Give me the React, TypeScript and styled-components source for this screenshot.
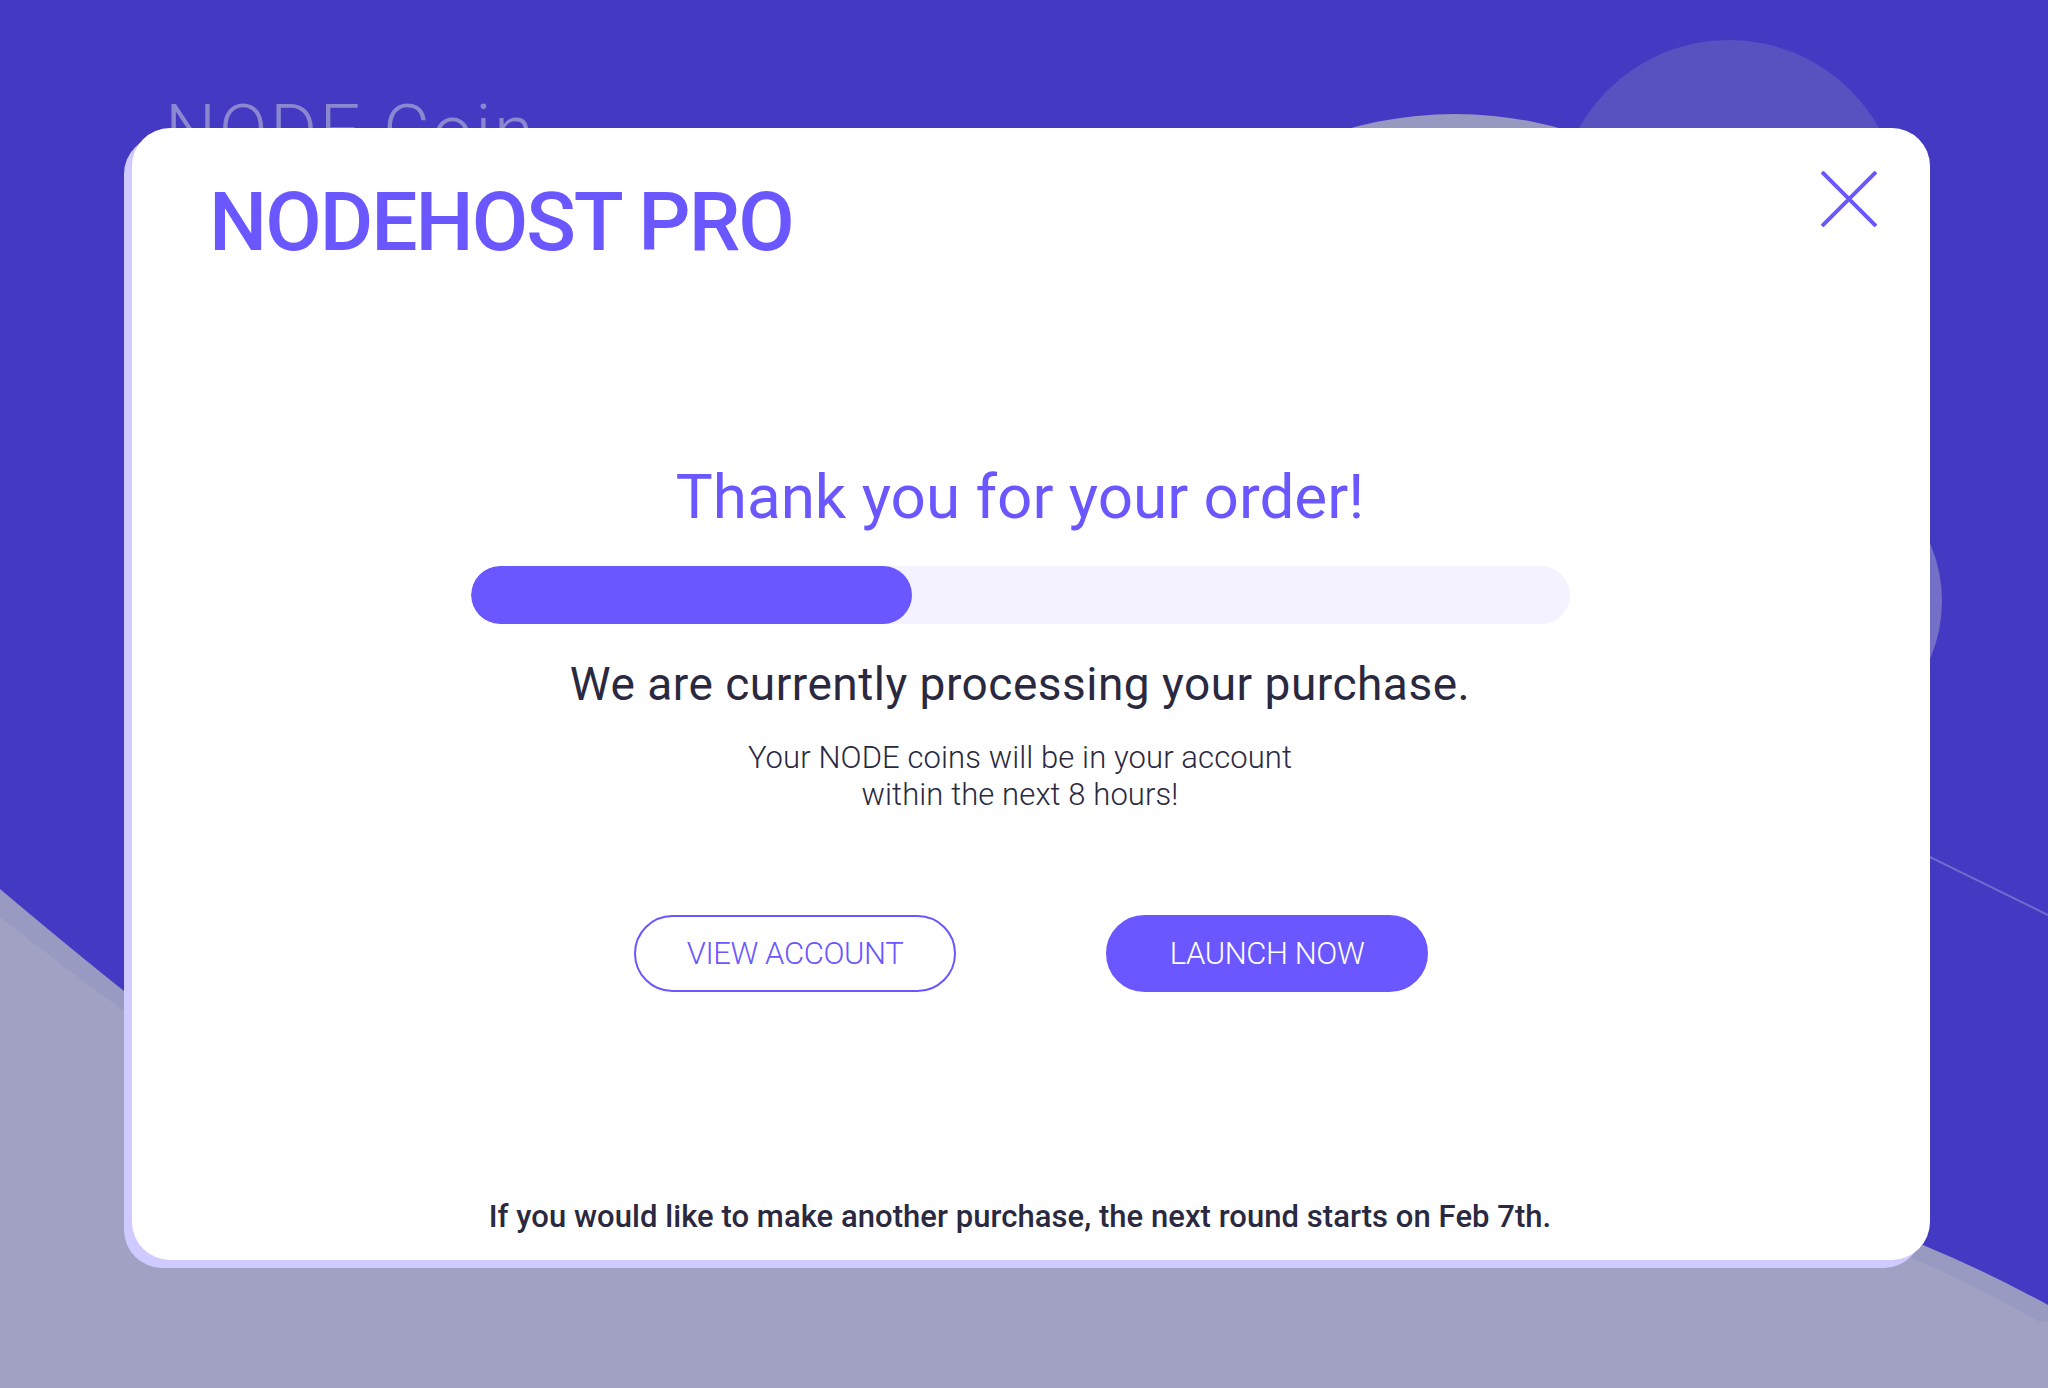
import React from "react";
import styled, { createGlobalStyle } from "styled-components";

const GlobalStyle = createGlobalStyle`
  html, body {
    margin: 0;
    padding: 0;
  }
  body {
    font-family: Roboto, "Liberation Sans", sans-serif;
    background: #4439c3;
  }
`;

const Page = styled.div`
  position: relative;
  width: 100%;
  height: 100vh;
  overflow: hidden;
  background: #4439c3;
`;

const Backdrop = styled.svg`
  position: absolute;
  inset: 0;
  width: 100%;
  height: 100%;
`;

const PageTitle = styled.h1`
  position: relative;
  margin: 0;
  padding: 96px 0 0 165px;
  font-size: 72px;
  line-height: 1;
  font-weight: 300;
  letter-spacing: 2.5px;
  color: #8b88cf;
`;

const Overlay = styled.div`
  position: absolute;
  inset: 0;
  display: flex;
  align-items: flex-start;
  padding: 128px 0 0 132px;
`;

const Card = styled.div`
  width: 1798px;
  height: 1132px;
  box-sizing: border-box;
  display: flex;
  flex-direction: column;
  background: #ffffff;
  border-radius: 38px;
  box-shadow: -8px 8px 0 #cfcaff;
`;

const Header = styled.div`
  display: flex;
  justify-content: space-between;
  align-items: flex-start;
  padding: 43px 53px 0 77px;
`;

const Brand = styled.div`
  margin-top: 10px;
  font-size: 82px;
  line-height: 1;
  font-weight: 500;
  letter-spacing: -2px;
  color: #6a57ff;
`;

const CloseButton = styled.button`
  width: 56px;
  height: 56px;
  padding: 0;
  border: none;
  background: none;
  cursor: pointer;
  svg {
    display: block;
  }
`;

const Body = styled.div`
  flex: 1;
  display: flex;
  flex-direction: column;
  align-items: center;
  padding: 0 22px 28px 0;
`;

const Thanks = styled.h2`
  margin: 203px 0 0;
  font-size: 62px;
  line-height: 1;
  font-weight: 400;
  color: #6a57ff;
`;

const Track = styled.div`
  margin-top: 38px;
  width: 1099px;
  height: 58px;
  border-radius: 29px;
  background: #f4f2fe;
  overflow: hidden;
`;

const Fill = styled.div`
  height: 100%;
  border-radius: 29px;
  background: #6a57ff;
`;

const Lead = styled.p`
  margin: 37px 0 0;
  font-size: 46px;
  line-height: 1;
  font-weight: 400;
  letter-spacing: 0.5px;
  color: #2a2940;
`;

const Note = styled.p`
  margin: 32px 0 0;
  font-size: 31px;
  line-height: 37px;
  font-weight: 300;
  letter-spacing: 0.1px;
  text-align: center;
  color: #2a2940;
`;

const Actions = styled.div`
  display: flex;
  gap: 150px;
  margin: 102px 0 0 22px;
`;

const Pill = styled.button<{ $filled?: boolean }>`
  width: 322px;
  height: 77px;
  box-sizing: border-box;
  border-radius: 39px;
  border: 2px solid #6a57ff;
  background: ${(p) => (p.$filled ? "#6a57ff" : "#ffffff")};
  color: ${(p) => (p.$filled ? "#ffffff" : "#6a57ff")};
  font-family: Roboto, "Liberation Sans", sans-serif;
  font-size: 31px;
  font-weight: 300;
  letter-spacing: -0.4px;
  cursor: pointer;
`;

const Footer = styled.p`
  margin: auto 0 0;
  font-size: 31px;
  line-height: 1;
  font-weight: 500;
  letter-spacing: 0.05px;
  color: #2a2940;
`;

export default function App() {
  const progress = 40.2;
  return (
    <>
      <GlobalStyle />
      <Page>
        <Backdrop viewBox="0 0 2048 1388" preserveAspectRatio="none">
          <circle cx="1455" cy="507" r="393" fill="#9899c1" />
          <path
            d="M0,889 Q70,948 124,991 L1923,1245 Q1988,1272 2048,1305 V1388 H0 Z"
            fill="#989ac1"
          />
          <path
            d="M0,917 Q70,972 124,1011 L1910,1257 Q1980,1288 2040,1322 L2048,1322 V1388 H0 Z"
            fill="#a1a1c4"
          />
          <circle cx="1729" cy="212" r="172" fill="#5852c0" />
          <circle cx="1796" cy="601" r="146" fill="#7470c8" />
          <line x1="1700" y1="744" x2="2048" y2="915" stroke="#6f6ccb" strokeWidth="2" />
        </Backdrop>
        <PageTitle>NODE Coin</PageTitle>
        <Overlay>
          <Card>
            <Header>
              <Brand>NODEHOST PRO</Brand>
              <CloseButton aria-label="Close">
                <svg width="56" height="56" viewBox="0 0 56 56">
                  <path d="M1 1 L55 55 M55 1 L1 55" stroke="#6a57ff" strokeWidth="4" fill="none" />
                </svg>
              </CloseButton>
            </Header>
            <Body>
              <Thanks>Thank you for your order!</Thanks>
              <Track>
                <Fill style={{ width: `${progress}%` }} />
              </Track>
              <Lead>We are currently processing your purchase.</Lead>
              <Note>
                Your NODE coins will be in your account
                <br />
                within the next 8 hours!
              </Note>
              <Actions>
                <Pill>VIEW ACCOUNT</Pill>
                <Pill $filled>LAUNCH NOW</Pill>
              </Actions>
              <Footer>
                If you would like to make another purchase, the next round starts on Feb 7th.
              </Footer>
            </Body>
          </Card>
        </Overlay>
      </Page>
    </>
  );
}
